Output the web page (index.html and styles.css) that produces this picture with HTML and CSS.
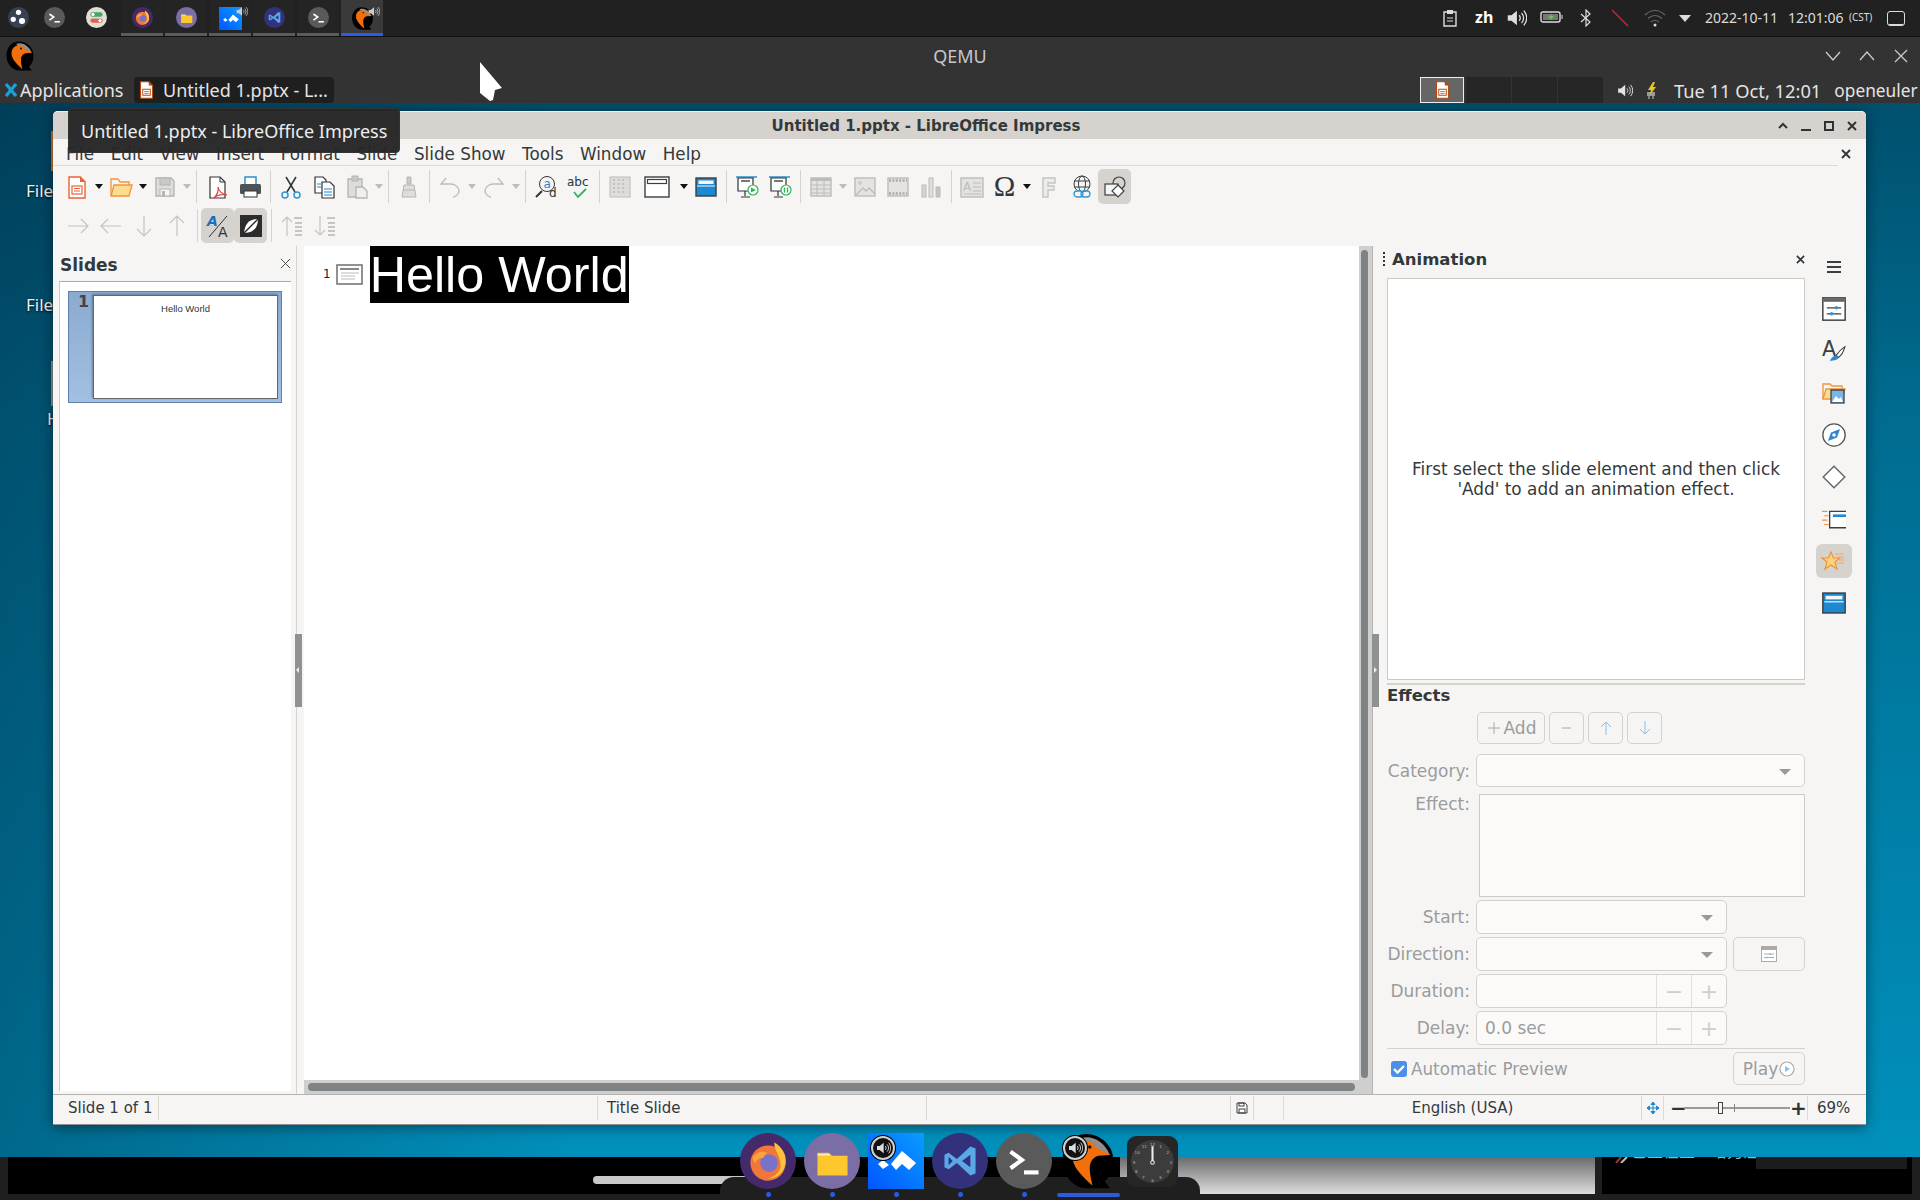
FILE: index.html
```html
<!DOCTYPE html>
<html>
<head>
	<meta charset="utf-8"/>
	<title>QEMU - Untitled 1.pptx</title>
	<link rel="stylesheet" href="styles.css">
</head>
<body>
<svg class="defs" xmlns="http://www.w3.org/2000/svg">
	<symbol id="i-qemu" viewBox="0 0 64 64">
		<path d="M30 1C14 1 3 14 3 31s12 32 28 32h26l-6-8c7-6 10-14 10-24C61 14 46 1 30 1z" fill="#000"/>
		<path d="M24 6c12-4 26 3 33 19l-17-4-12-9z" fill="#8f8f8f"/>
		<path d="M24 10c8-3 14 0 18 7l16 8-14 1c-5 1-10 6-10 14 0 8 2 14 3 20C26 50 13 38 14 25c0-7 5-13 10-15z" fill="#f26f0c"/>
		<circle cx="34" cy="16" r="2" fill="#111"/>
	</symbol>
	<symbol id="i-firefox" viewBox="0 0 54 54">
		<circle cx="27" cy="27" r="27" fill="#452a6b"/>
		<circle cx="27" cy="29" r="17" fill="#f0763a"/>
		<path d="M33 9c8 5 12 12 11 20-1 9-8 15-17 15 8-2 13-8 12-15-1-8-6-12-6-20z" fill="#fcc13d"/>
		<circle cx="28" cy="29" r="8.5" fill="#7a72c9"/>
		<path d="M12 24c4-6 10-7 14-5l-4 5c-4 0-7 2-7 6z" fill="#fba43c"/>
	</symbol>
	<symbol id="i-folder" viewBox="0 0 54 54">
		<circle cx="27" cy="27" r="27" fill="#7b6ea6"/>
		<path d="M13 19h11l3 3h15v19H13z" fill="#fdc72e"/>
		<path d="M13 21h12" stroke="#fff" stroke-width="1"/>
	</symbol>
	<symbol id="i-app" viewBox="0 0 56 56">
		<defs><linearGradient id="g-app" x1="1" y1="0" x2="0" y2="1"><stop offset="0" stop-color="#0a9cff"/><stop offset="1" stop-color="#0056ff"/></linearGradient></defs>
		<rect width="56" height="56" fill="url(#g-app)"/>
		<path d="M34 18l14 12-7 7-7-6-6 6-5-6zM10 31l5-4 6 5-6 4z" fill="#fff"/>
	</symbol>
	<symbol id="i-code" viewBox="0 0 54 54">
		<circle cx="27" cy="27" r="27" fill="#33307c"/>
		<path d="M37 13l-13 12-8-6-4 2v12l4 2 8-6 13 12 5-2V15zM37 21v12l-8-6zM16 23l4 4-4 4z" fill="#5aa9e6"/>
	</symbol>
	<symbol id="i-term" viewBox="0 0 54 54">
		<circle cx="27" cy="27" r="27" fill="#5a5a5a"/>
		<path d="M14 18l11 8-11 8" fill="none" stroke="#fff" stroke-width="4"/>
		<path d="M27 38h14" stroke="#fff" stroke-width="4"/>
	</symbol>
	<symbol id="i-speaker" viewBox="0 0 24 24">
		<path d="M3 9h4l6-5v16l-6-5H3z" fill="currentColor"/>
		<path d="M15.500 9c1.500 2 1.500 4 0 6M18 6.500c3 3 3 8 0 11M20.500 4c4 5 4 11 0 16" fill="none" stroke="currentColor" stroke-width="1.400"/>
	</symbol>
	<symbol id="i-impress" viewBox="0 0 20 24">
		<path d="M2 1h11l5 5v17H2z" fill="#fff" stroke="#b84a10" stroke-width="1.500"/>
		<path d="M13 0l6 6h-6z" fill="#b84a10"/>
		<rect x="5" y="11" width="10" height="8" fill="none" stroke="#b84a10" stroke-width="1.300"/>
		<path d="M7 14h6M7 16.500h6" stroke="#b84a10"/>
	</symbol>
</svg>

<div class="screen">
	<div class="top-panel">
		<div class="launchers">
			<svg class="top-ic" viewBox="0 0 24 24"><circle cx="12" cy="12" r="12" fill="#3a4054"/><circle cx="12" cy="6" r="3" fill="#fff"/><circle cx="6" cy="14" r="3" fill="#fff"/><circle cx="16" cy="16" r="3.500" fill="#fff"/></svg>
			<svg class="top-ic"><use href="#i-term"/></svg>
			<svg class="top-ic top-ic-wide" viewBox="0 0 24 24"><circle cx="12" cy="12" r="12" fill="#dfe0d2"/><rect x="5" y="6" width="14" height="5" rx="2.500" fill="#45a66a"/><rect x="5" y="13" width="14" height="5" rx="2.500" fill="#e0605c"/><circle cx="8" cy="8.500" r="1.800" fill="#fff"/><circle cx="16" cy="15.500" r="1.800" fill="#fff"/></svg>
		</div>
		<div class="tasks">
			<div class="task"><svg class="top-ic"><use href="#i-firefox"/></svg></div>
			<div class="task"><svg class="top-ic"><use href="#i-folder"/></svg></div>
			<div class="task"><svg class="top-ic top-ic-sq"><use href="#i-app"/></svg><svg class="task-snd"><use href="#i-speaker"/></svg></div>
			<div class="task"><svg class="top-ic"><use href="#i-code"/></svg></div>
			<div class="task"><svg class="top-ic"><use href="#i-term"/></svg></div>
			<div class="task task-on"><svg class="top-ic top-ic-sq"><use href="#i-qemu"/></svg><svg class="task-snd"><use href="#i-speaker"/></svg></div>
		</div>
		<div class="tray">
			<svg class="tray-ic" viewBox="0 0 16 18"><path d="M2 3h12v14H2z" fill="none" stroke="#ddd" stroke-width="1.400"/><rect x="5" y="1" width="6" height="4" fill="#ddd"/><path d="M5 9h6M5 12h6" stroke="#ddd"/></svg>
			<span class="tray-zh">zh</span>
			<svg class="tray-ic tray-snd"><use href="#i-speaker"/></svg>
			<svg class="tray-bat" viewBox="0 0 24 14"><rect x="1" y="2" width="19" height="10" rx="2" fill="none" stroke="#ddd" stroke-width="1.400"/><rect x="3" y="4" width="15" height="6" fill="#777"/><path d="M22 5v4" stroke="#ddd"/><path d="M12 3l-4 5h3l-1 3 4-5h-3z" fill="#5fd03c"/></svg>
			<svg class="tray-ic" viewBox="0 0 16 18"><path d="M3 5l9 8-4 4V1l4 4-9 8" fill="none" stroke="#ddd" stroke-width="1.200"/></svg>
			<svg class="tray-ic" viewBox="0 0 18 18"><path d="M1 1l16 16" stroke="#c0303c" stroke-width="1.200"/></svg>
			<svg class="tray-ic" viewBox="0 0 22 18"><path d="M1 6c6-6 14-6 20 0M4 9.500c4-4 10-4 14 0M7 13c2-2 6-2 8 0" fill="none" stroke="#666" stroke-width="1.200"/><circle cx="11" cy="16" r="1.500" fill="#ddd"/></svg>
			<span class="tray-arrow"></span>
			<span class="tray-date">2022-10-11</span>
			<span class="tray-time">12:01:06</span>
			<span class="tray-zone">(CST)</span>
			<span class="tray-box"></span>
		</div>
	</div>

	<div class="qemu-title">
		<svg class="qemu-logo"><use href="#i-qemu"/></svg>
		<span class="qemu-name">QEMU</span>
		<div class="qemu-btns">
			<svg viewBox="0 0 18 18"><path d="M2 5l7 8 7-8" fill="none" stroke="#ccc" stroke-width="1.300"/></svg>
			<svg viewBox="0 0 18 18"><path d="M2 13l7-8 7 8" fill="none" stroke="#ccc" stroke-width="1.300"/></svg>
			<svg viewBox="0 0 18 18"><path d="M3 3l12 12M15 3L3 15" fill="none" stroke="#ccc" stroke-width="1.300"/></svg>
		</div>
	</div>

	<div class="xfce-panel">
		<svg class="xfce-logo" viewBox="0 0 14 16"><path d="M2 2l10 12M12 2L2 14" stroke="#1aa0d8" stroke-width="3.400"/></svg>
		<span class="xfce-apps">Applications</span>
		<div class="xfce-task"><svg class="xfce-doc"><use href="#i-impress"/></svg>Untitled 1.pptx - L...</div>
		<div class="pager">
			<div class="pager-cell pager-on"><svg class="xfce-doc"><use href="#i-impress"/></svg></div>
			<div class="pager-cell"></div>
			<div class="pager-cell"></div>
			<div class="pager-cell"></div>
		</div>
		<svg class="xfce-snd"><use href="#i-speaker"/></svg>
		<svg class="xfce-plug" viewBox="0 0 18 18"><rect x="5" y="11" width="8" height="4" fill="#999"/><path d="M7 15v3M11 15v3" stroke="#ccc"/><path d="M11 1L6 9h3l-1 5 6-8h-3l2-5z" fill="#e8c81c"/></svg>
		<span class="xfce-clock">Tue 11 Oct, 12:01</span>
		<span class="xfce-user">openeuler</span>
	</div>

	<div class="desktop">
		<span class="desk-label desk-a">File</span>
		<span class="desk-label desk-b">File</span>
		<span class="desk-label desk-c">H</span>
		<div class="sliver sliver-a"></div>
		<div class="sliver sliver-b"></div>

		<div class="lo-window">
			<div class="lo-title">
				<span class="lo-title-text">Untitled 1.pptx - LibreOffice Impress</span>
				<div class="lo-title-btns">
					<svg viewBox="0 0 12 12"><path d="M2 8l4-4 4 4" fill="none" stroke="#2e3436" stroke-width="2"/></svg>
					<svg viewBox="0 0 12 12"><path d="M1 10h10" stroke="#2e3436" stroke-width="2"/></svg>
					<svg viewBox="0 0 12 12"><rect x="2" y="2" width="8" height="8" fill="none" stroke="#2e3436" stroke-width="2"/></svg>
					<svg viewBox="0 0 12 12"><path d="M2 2l8 8M10 2l-8 8" stroke="#2e3436" stroke-width="2"/></svg>
				</div>
			</div>

			<div class="lo-menu">
				<span>File</span><span>Edit</span><span>View</span><span>Insert</span><span>Format</span><span>Slide</span><span>Slide Show</span><span>Tools</span><span>Window</span><span>Help</span>
				<svg class="lo-menu-close" viewBox="0 0 10 10"><path d="M1 1l8 8M9 1L1 9" stroke="#2e3436" stroke-width="1.800"/></svg>
			</div>

			<div class="toolbar">
				<span class="tb"><svg viewBox="0 0 24 24"><path d="M4 2h11l5 5v16H4z" fill="#fff" stroke="#e8623c" stroke-width="1.400"/><path d="M15 1l6 6h-6z" fill="#e8623c"/><rect x="7" y="11" width="10" height="8" fill="none" stroke="#e8623c" stroke-width="1.200"/><path d="M9 13.500h6M9 16h6" stroke="#e8623c"/></svg></span><span class="dd"></span>
				<span class="tb"><svg viewBox="0 0 24 24"><path d="M2 20V4h7l2 3h9v3" fill="none" stroke="#f0923c" stroke-width="1.300"/><path d="M2 21l3-11h18l-3 11z" fill="#fcdc8f" stroke="#f0923c" stroke-width="1.300"/></svg></span><span class="dd"></span>
				<span class="tb"><svg viewBox="0 0 24 24"><path d="M3 3h15l3 3v15H3z" fill="#dedddb" stroke="#b5b5b3" stroke-width="1.400"/><rect x="7" y="3" width="10" height="7" fill="#c9c9c7" stroke="#b5b5b3"/><rect x="7" y="14" width="10" height="7" fill="#f6f5f4" stroke="#b5b5b3"/><rect x="9" y="16" width="3" height="5" fill="#b5b5b3"/></svg></span><span class="dd dd-off"></span>
				<span class="sep"></span>
				<span class="tb"><svg viewBox="0 0 24 24"><path d="M5 2h10l5 5v16H5z" fill="#fff" stroke="#2e3436" stroke-width="1.200"/><path d="M15 2v5h5" fill="none" stroke="#2e3436"/><path d="M13 12c1 5-1 8-4 11 3-3 8-4 13-3-5-1-8-3-9-8z" fill="none" stroke="#e0403a" stroke-width="1.200"/></svg></span>
				<span class="tb"><svg viewBox="0 0 24 24"><rect x="7" y="2" width="11" height="8" fill="#fff" stroke="#1e88c9" stroke-width="1.400"/><rect x="2" y="9" width="21" height="10" rx="1.500" fill="#4d5356"/><rect x="6" y="16" width="13" height="6" fill="#fff" stroke="#2e3436"/></svg></span>
				<span class="sep"></span>
				<span class="tb"><svg viewBox="0 0 24 24"><path d="M7 2l9 15M17 2L8 17" stroke="#2e3436" stroke-width="1.500"/><circle cx="6" cy="20" r="3" fill="none" stroke="#2f96d8" stroke-width="1.500"/><circle cx="18" cy="20" r="3" fill="none" stroke="#2f96d8" stroke-width="1.500"/></svg></span>
				<span class="tb"><svg viewBox="0 0 24 24"><path d="M3 2h8l3 3v13H3z" fill="#fff" stroke="#2e3436" stroke-width="1.200"/><path d="M10 7h8l4 4v12H10z" fill="#fff" stroke="#2e3436" stroke-width="1.200"/><path d="M5 9h4M5 12h4M12 14h8M12 17h8M12 20h8" stroke="#1e88c9" stroke-width="1.200"/></svg></span>
				<span class="tb"><svg viewBox="0 0 24 24"><path d="M3 4h14v18H3z" fill="#dedddb" stroke="#b5b5b3" stroke-width="1.300"/><rect x="7" y="1" width="6" height="5" fill="#c9c9c7" stroke="#b5b5b3"/><path d="M11 12h7l4 4v7H11z" fill="#f0efed" stroke="#b5b5b3" stroke-width="1.300"/></svg></span><span class="dd dd-off"></span>
				<span class="sep"></span>
				<span class="tb"><svg viewBox="0 0 24 24"><path d="M10 2h4v7h-4z" fill="#c9c9c7" stroke="#b5b5b3"/><path d="M7 10h10l2 12H5z" fill="#dedddb" stroke="#b5b5b3"/><path d="M6 15h12" stroke="#b5b5b3"/></svg></span>
				<span class="sep"></span>
				<span class="tb"><svg viewBox="0 0 24 24"><path d="M8 3L3 9h5M3 9h10c5 0 8 4 8 7 0 3-3 6-6 6" fill="none" stroke="#bcbcba" stroke-width="1.400"/></svg></span><span class="dd dd-off"></span>
				<span class="tb"><svg viewBox="0 0 24 24"><path d="M16 3l5 6h-5M21 9H11c-5 0-8 4-8 7 0 3 3 6 6 6" fill="none" stroke="#bcbcba" stroke-width="1.400"/></svg></span><span class="dd dd-off"></span>
				<span class="sep"></span>
				<span class="tb"><svg viewBox="0 0 24 24"><circle cx="13" cy="9" r="7.500" fill="none" stroke="#2e3436"/><path d="M2 22l6-6" stroke="#2e3436" stroke-width="2"/><text x="9.500" y="13" class="svg-t" fill="#1e88c9">a</text><text x="15" y="22" class="svg-t" fill="#2e3436">d</text></svg></span>
				<span class="tb"><svg viewBox="0 0 24 24"><text x="0" y="11" class="svg-t" fill="#2e3436">abc</text><path d="M7 17l4 5 8-8" fill="none" stroke="#2fb35a" stroke-width="1.800"/></svg></span>
				<span class="sep"></span>
				<span class="tb"><svg viewBox="0 0 24 24"><rect x="2" y="2" width="20" height="20" fill="#dedddb" stroke="#bcbcba"/><path d="M5 5h14M5 9h14M5 13h14M5 17h14" stroke="#b5b5b3" stroke-dasharray="2 2.600" stroke-width="1.400"/></svg></span>
				<span class="tb tb-wide"><svg viewBox="0 0 28 24"><rect x="2" y="2" width="24" height="20" fill="#fff" stroke="#3a3f41" stroke-width="1.400"/><rect x="4.500" y="4.500" width="19" height="4" fill="none" stroke="#3a3f41" stroke-width="1.200"/></svg></span><span class="dd"></span>
				<span class="tb"><svg viewBox="0 0 24 24"><rect x="2" y="3" width="20" height="18" fill="#1e88d0" stroke="#3a3f41" stroke-width="1.400"/><rect x="4.500" y="5.500" width="15" height="3.500" fill="#f6f5f4"/><path d="M3 11h18" stroke="#f6f5f4"/></svg></span>
				<span class="sep"></span>
				<span class="tb"><svg viewBox="0 0 24 24"><path d="M1 2h21" stroke="#1e88c9" stroke-width="1.400"/><path d="M3 3h15v13H3z" fill="#fff" stroke="#2e3436" stroke-width="1.200"/><path d="M6 6h9" stroke="#777" stroke-width="2"/><path d="M10 16v5M6 22h9" stroke="#2e3436" stroke-width="1.200"/><circle cx="18" cy="15" r="5" fill="#fff" stroke="#2fb35a" stroke-width="1.200"/><path d="M16 12.500l5 2.500-5 2.500z" fill="#2fb35a"/></svg></span>
				<span class="tb"><svg viewBox="0 0 24 24"><path d="M1 2h21" stroke="#1e88c9" stroke-width="1.400"/><path d="M3 3h15v13H3z" fill="#fff" stroke="#2e3436" stroke-width="1.200"/><path d="M6 6h9" stroke="#777" stroke-width="2"/><path d="M10 16v5M6 22h9" stroke="#2e3436" stroke-width="1.200"/><circle cx="18" cy="15" r="5" fill="#fff" stroke="#2fb35a" stroke-width="1.200"/><path d="M16.500 12.500v5M19.500 12.500v5" stroke="#2fb35a" stroke-width="1.400"/></svg></span>
				<span class="sep"></span>
				<span class="tb"><svg viewBox="0 0 24 24"><rect x="2" y="3" width="20" height="18" fill="#e4e3e1" stroke="#bcbcba" stroke-width="1.400"/><rect x="2" y="3" width="20" height="3" fill="#bcbcba"/><path d="M2 10h20M2 14h20M2 18h20M8 6v15M15 6v15" stroke="#bcbcba"/></svg></span><span class="dd dd-off"></span>
				<span class="tb"><svg viewBox="0 0 24 24"><rect x="2" y="3" width="20" height="18" fill="#e4e3e1" stroke="#bcbcba" stroke-width="1.400"/><circle cx="7" cy="8" r="2" fill="#ccc"/><path d="M3 20l7-7 3 3 3-3 6 6" fill="none" stroke="#bcbcba" stroke-width="1.400"/></svg></span>
				<span class="tb"><svg viewBox="0 0 24 24"><rect x="2" y="3" width="20" height="18" fill="#e4e3e1" stroke="#bcbcba" stroke-width="1.400"/><path d="M3 5.500h18M3 18.500h18" stroke="#aaa" stroke-width="2.400" stroke-dasharray="2 1.400"/></svg></span>
				<span class="tb"><svg viewBox="0 0 24 24"><rect x="3" y="10" width="4" height="12" fill="#d5d4d2" stroke="#bcbcba"/><rect x="10" y="3" width="4" height="19" fill="#dedddb" stroke="#bcbcba"/><rect x="17" y="12" width="4" height="10" fill="#c4c4c2" stroke="#bcbcba"/></svg></span>
				<span class="sep"></span>
				<span class="tb"><svg viewBox="0 0 24 24"><rect x="1" y="3" width="22" height="19" fill="#e4e3e1" stroke="#bcbcba" stroke-width="1.400"/><text x="3" y="16" class="svg-t" fill="#bcbcba">A</text><path d="M13 8h8M13 12h8M13 16h8M4 19h17" stroke="#bcbcba"/></svg></span>
				<span class="tb"><span class="omega">Ω</span></span><span class="dd"></span>
				<span class="tb"><svg viewBox="0 0 24 24"><path d="M6 3h12v5h-7v3h6v4h-6v7H6z" fill="#ececea" stroke="#c4c4c2" stroke-width="1.400"/></svg></span>
				<span class="tb"><svg viewBox="0 0 24 24"><circle cx="12" cy="9" r="8" fill="none" stroke="#3a3f41"/><ellipse cx="12" cy="9" rx="3.500" ry="8" fill="none" stroke="#3a3f41"/><path d="M4 6h16M4 12h16" stroke="#3a3f41"/><rect x="4" y="16" width="9" height="6" rx="3" fill="#f6f5f4" stroke="#2f96d8" stroke-width="1.300"/><rect x="11" y="16" width="9" height="6" rx="3" fill="none" stroke="#2f96d8" stroke-width="1.300"/></svg></span>
				<span class="tb tb-on"><svg viewBox="0 0 24 24"><circle cx="16" cy="8" r="6" fill="none" stroke="#3a3f41" stroke-width="1.200"/><rect x="2" y="9" width="13" height="11" fill="#f6f5f4" stroke="#3a3f41" stroke-width="1.200"/><path d="M15 10l6 6-6 6-6-6z" fill="#fff" stroke="#3a3f41" stroke-width="1.200"/></svg></span>
			</div>

			<div class="toolbar toolbar-b">
				<span class="tb"><svg viewBox="0 0 24 24"><path d="M2 12h20M15 5l7 7-7 7" fill="none" stroke="#c4c4c2" stroke-width="1.200"/></svg></span>
				<span class="tb"><svg viewBox="0 0 24 24"><path d="M22 12H2M9 5l-7 7 7 7" fill="none" stroke="#c4c4c2" stroke-width="1.200"/></svg></span>
				<span class="tb"><svg viewBox="0 0 24 24"><path d="M12 2v20M5 15l7 7 7-7" fill="none" stroke="#c4c4c2" stroke-width="1.200"/></svg></span>
				<span class="tb"><svg viewBox="0 0 24 24"><path d="M12 22V2M5 9l7-7 7 7" fill="none" stroke="#c4c4c2" stroke-width="1.200"/></svg></span>
				<span class="sep"></span>
				<span class="tb tb-on"><svg viewBox="0 0 24 24"><path d="M3 23L21 2" stroke="#2e3436"/><text x="1" y="12" class="svg-t svg-big svg-i" fill="#1a6fc0">A</text><text x="12" y="23" class="svg-t svg-big" fill="#2e3436">A</text></svg></span>
				<span class="tb tb-on"><svg viewBox="0 0 24 24"><rect x="1" y="1" width="22" height="22" fill="#2c2c2c"/><path d="M5 19C6 9 11 5 19 5c0 8-4 14-14 14z" fill="#fff"/><path d="M3 21L21 3" stroke="#2c2c2c" stroke-width="1.400"/></svg></span>
				<span class="sep"></span>
				<span class="tb"><svg viewBox="0 0 24 24"><path d="M7 22V3M2 8l5-5 5 5" fill="none" stroke="#c4c4c2" stroke-width="1.200"/><path d="M14 4h8M15 9h7M15 13h7M15 17h7M15 21h7" stroke="#b5b5b3" stroke-width="1.300"/></svg></span>
				<span class="tb"><svg viewBox="0 0 24 24"><path d="M7 2v19M2 16l5 5 5-5" fill="none" stroke="#c4c4c2" stroke-width="1.200"/><path d="M14 4h8M15 9h7M15 13h7M15 17h7M15 21h7" stroke="#b5b5b3" stroke-width="1.300"/></svg></span>
			</div>

			<div class="lo-body">
				<div class="slides-pane">
					<div class="slides-head"><b>Slides</b><svg viewBox="0 0 12 12"><path d="M1 1l10 10M11 1L1 11" stroke="#3a3f41"/></svg></div>
					<div class="slides-list">
						<div class="thumb-sel">
							<span class="thumb-num">1</span>
							<div class="thumb"><span>Hello World</span></div>
						</div>
					</div>
				</div>
				<div class="sash"><i></i></div>
				<div class="editor">
					<div class="editor-row">
						<div class="outline">
							<span class="outline-num">1</span>
							<svg class="outline-ic" viewBox="0 0 27 21"><rect x="1" y="1" width="25" height="19" fill="#fff" stroke="#777" stroke-width="1.600"/><path d="M4 5h19" stroke="#888" stroke-width="2"/><path d="M5 9h18M5 12h14M5 15h14" stroke="#bbb"/></svg>
							<span class="outline-text">Hello World</span>
						</div>
						<div class="vscroll"><i></i></div>
					</div>
					<div class="hscroll"><i></i></div>
				</div>
				<div class="sash sash-r"><i></i></div>
				<div class="anim-pane">
					<div class="anim-head">
						<span class="grip"></span><b>Animation</b>
						<svg viewBox="0 0 10 10"><path d="M1 1l8 8M9 1L1 9" stroke="#2e3436" stroke-width="1.800"/></svg>
					</div>
					<div class="anim-box">First select the slide element and then click<br>'Add' to add an animation effect.</div>
					<div class="anim-rule"></div>
					<b class="fx-title">Effects</b>
					<div class="fx-row fx-row-btns">
						<span class="fx-label"></span>
						<span class="btn btn-add"><svg viewBox="0 0 16 16"><path d="M8 2v12M2 8h12" stroke="#a8a8a8"/></svg>Add</span>
						<span class="btn btn-sq"><svg viewBox="0 0 16 16"><path d="M3 8h9" stroke="#a8a8a8"/></svg></span>
						<span class="btn btn-sq"><svg viewBox="0 0 16 16"><path d="M8 15V2M3 7l5-5 5 5" fill="none" stroke="#8cc0e4"/></svg></span>
						<span class="btn btn-sq"><svg viewBox="0 0 16 16"><path d="M8 1v13M3 9l5 5 5-5" fill="none" stroke="#8cc0e4"/></svg></span>
					</div>
					<div class="fx-row fx-row-cat">
						<span class="fx-label">Category:</span>
						<span class="combo combo-full"></span>
					</div>
					<div class="fx-row fx-row-list">
						<span class="fx-label">Effect:</span>
						<span class="fx-list"></span>
					</div>
					<div class="fx-row">
						<span class="fx-label">Start:</span>
						<span class="combo"></span>
					</div>
					<div class="fx-row">
						<span class="fx-label">Direction:</span>
						<span class="combo"></span>
						<span class="btn btn-wide"><svg viewBox="0 0 16 16"><rect x="0.500" y="0.500" width="15" height="15" fill="#fff" stroke="#aaa"/><rect x="1" y="1" width="14" height="3" fill="#aaa"/><path d="M3 8h10M3 11.500h10" stroke="#aaa"/><circle cx="9" cy="8" r="1" fill="#8cc0e4"/><circle cx="6" cy="11.500" r="1" fill="#8cc0e4"/></svg></span>
					</div>
					<div class="fx-row">
						<span class="fx-label">Duration:</span>
						<span class="spin"><span class="spin-val"></span><span class="spin-btn">−</span><span class="spin-btn">+</span></span>
					</div>
					<div class="fx-row">
						<span class="fx-label">Delay:</span>
						<span class="spin"><span class="spin-val">0.0 sec</span><span class="spin-btn">−</span><span class="spin-btn">+</span></span>
					</div>
					<div class="fx-foot">
						<span class="check"><svg viewBox="0 0 16 16"><path d="M3 8l3.500 3.500L13 5" fill="none" stroke="#fff" stroke-width="2.400"/></svg></span>
						<span class="check-label">Automatic Preview</span>
						<span class="btn btn-play">Play<svg viewBox="0 0 16 16"><circle cx="8" cy="8" r="7" fill="#fff" stroke="#aaa" stroke-width="1.200"/><path d="M6 5l5 3-5 3z" fill="#8cc0e4"/></svg></span>
					</div>
				</div>
				<div class="deck">
					<span class="deck-item"><svg viewBox="0 0 16 14"><path d="M1 2h14M1 7h14M1 12h14" stroke="#3a3f41" stroke-width="2"/></svg></span>
					<span class="deck-item"><svg viewBox="0 0 20 20"><rect x="0.700" y="0.700" width="18.600" height="18.600" fill="#fff" stroke="#3a3f41" stroke-width="1.200"/><rect x="1" y="1" width="18" height="3" fill="#666"/><path d="M4 9h12M4 14h12" stroke="#3a3f41"/><circle cx="12" cy="9" r="1.500" fill="#2f96d8"/><circle cx="8" cy="14" r="1.500" fill="#2f96d8"/></svg></span>
					<span class="deck-item"><svg viewBox="0 0 22 20"><text x="0" y="15" class="svg-deck-a" fill="#3a3f41">A</text><path d="M21 6c-3 2-6 5-8 8l2 2c3-2 5-6 6-10z" fill="#fff" stroke="#3a3f41"/><path d="M13 14c-2 0-4 2-6 5 4 0 8-1 8-3z" fill="#2f86d0"/></svg></span>
					<span class="deck-item"><svg viewBox="0 0 24 22"><path d="M1 17V2h7l2 2h10v3" fill="none" stroke="#f0923c" stroke-width="1.300"/><path d="M1 17l3-10h19l-3 10z" fill="#fcdc8f" stroke="#f0923c" stroke-width="1.300"/><rect x="9" y="8" width="13" height="13" fill="#7db4e6" stroke="#2e3436" stroke-width="1.200"/><path d="M10 20l4-6 3 3 2-2 2 5z" fill="#fff"/></svg></span>
					<span class="deck-item"><svg viewBox="0 0 20 20"><circle cx="10" cy="10" r="9.300" fill="#fff" stroke="#555" stroke-width="1.100"/><path d="M15 5l-2.500 7L5 15l2.500-7z" fill="#2f86d0"/><circle cx="10" cy="10" r="1.500" fill="#fff"/></svg></span>
					<span class="deck-item"><svg viewBox="0 0 20 20"><path d="M10 1l9 9-9 9-9-9z" fill="#fff" stroke="#666" stroke-width="1.200"/></svg></span>
					<span class="deck-item"><svg viewBox="0 0 22 20"><path d="M0 3h5M2 7h4M0 11h5M2 15h4" stroke="#f0923c"/><path d="M22 3H7v15h15" fill="#fff" stroke="#3a3f41" stroke-width="1.200"/><path d="M10 7h12" stroke="#1e88d0" stroke-width="2.400"/></svg></span>
					<span class="deck-item deck-on"><svg viewBox="0 0 24 20"><path d="M9 1l2.500 6H18l-5 4 2 7-6-4-6 4 2-7-5-4h6.500z" fill="#fcd27c" stroke="#f0923c" stroke-width="1.200"/><path d="M13 3h9M15 6h7M17 9h6M15 12h7" stroke="#f0a86a"/></svg></span>
					<span class="deck-item"><svg viewBox="0 0 20 18"><rect x="0.700" y="0.700" width="18.600" height="16.600" fill="#1e88d0" stroke="#3a3f41" stroke-width="1.200"/><rect x="3" y="3" width="14" height="3" fill="#f6f5f4"/><path d="M2 8h16" stroke="#f6f5f4"/></svg></span>
				</div>
			</div>

			<div class="statusbar">
				<span class="st st-a">Slide 1 of 1</span>
				<span class="st st-b"></span>
				<span class="st st-c">Title Slide</span>
				<span class="st st-d"></span>
				<span class="st st-e"><svg viewBox="0 0 12 12"><path d="M1 1h8l2 2v8H1z" fill="#fff" stroke="#3a3f41"/><rect x="3" y="1" width="5" height="3" fill="none" stroke="#3a3f41"/><rect x="3" y="7" width="6" height="4" fill="none" stroke="#3a3f41"/></svg></span>
				<span class="st st-f"></span>
				<span class="st st-g">English (USA)</span>
				<span class="st st-h"><svg viewBox="0 0 14 14"><path d="M7 1v12M1 7h12M7 1L5 3.500h4zM7 13l-2-2.500h4zM1 7l2.500-2v4zM13 7l-2.500-2v4z" fill="#1e88d0" stroke="#1e88d0"/></svg></span>
				<span class="st st-i">
					<span class="zoom-btn">−</span>
					<span class="zoom-track"><i class="zoom-tick"></i><i class="zoom-knob"></i></span>
					<span class="zoom-btn">+</span>
				</span>
				<span class="st st-j">69%</span>
			</div>
		</div>

		<div class="tooltip">Untitled 1.pptx - LibreOffice Impress</div>
	</div>

	<div class="under">
		<div class="under-dark"></div>
		<div class="under-black"><i class="pill"></i></div>
		<div class="under-grad"></div>
		<div class="under-dark under-gap"></div>
		<div class="under-right">
			<svg class="under-pen" viewBox="0 0 14 6"><path d="M1 6l5-6" stroke="#a03030" stroke-width="2"/><path d="M6 6l6-6" stroke="#bbb" stroke-width="2"/></svg>
			<div class="under-text">已正在上二培力注</div>
			<div class="under-bar"></div>
		</div>
		<div class="under-dark"></div>
	</div>
	<div class="strip"></div>

	<div class="dock-base"></div>
	<div class="dock">
		<div class="dock-item"><svg class="dock-ic"><use href="#i-firefox"/></svg><i class="dock-dot"></i></div>
		<div class="dock-item"><svg class="dock-ic"><use href="#i-folder"/></svg><i class="dock-dot"></i></div>
		<div class="dock-item"><svg class="dock-ic"><use href="#i-app"/></svg><span class="snd-badge"><svg><use href="#i-speaker"/></svg></span><i class="dock-dot"></i></div>
		<div class="dock-item"><svg class="dock-ic"><use href="#i-code"/></svg><i class="dock-dot"></i></div>
		<div class="dock-item"><svg class="dock-ic"><use href="#i-term"/></svg><i class="dock-dot"></i></div>
		<div class="dock-item"><svg class="dock-ic"><use href="#i-qemu"/></svg><span class="snd-badge"><svg><use href="#i-speaker"/></svg></span><i class="dock-dot dock-dot-on"></i></div>
		<div class="dock-item">
			<svg class="dock-clock" viewBox="0 0 50 50">
				<rect width="50" height="50" rx="9" fill="#262626"/>
				<circle cx="25" cy="25" r="21" fill="#3c3c3c"/>
				<g class="clock-nums" fill="#bbb" text-anchor="middle">
					<text x="25" y="10">12</text><text x="33" y="12">1</text><text x="40" y="18">2</text><text x="43" y="27">3</text><text x="40" y="36">4</text><text x="33" y="42">5</text><text x="25" y="45">6</text><text x="16" y="42">7</text><text x="9" y="36">8</text><text x="7" y="27">9</text><text x="10" y="18">10</text><text x="17" y="12">11</text>
				</g>
				<path d="M25 10v15" stroke="#eee" stroke-width="2"/>
				<circle cx="25" cy="26" r="1.800" fill="#333" stroke="#eee"/>
			</svg>
		</div>
	</div>

	<svg class="cursor" viewBox="0 0 24 40"><path d="M1 1l22 26-7 2-2 10-3 1-10-8z" fill="#fff"/></svg>
</div>
</body>
</html>
```

FILE: styles.css
```css
* {
	box-sizing: border-box;
}
html, body {
	margin: 0;
	padding: 0;
}
body {
	width: 1920px;
	height: 1200px;
	overflow: hidden;
	background: #1f1f1f;
	font-family: "DejaVu Sans", sans-serif;
	color: #2e3436;
}
.defs {
	position: absolute;
	width: 0;
	height: 0;
}
.screen {
	position: relative;
	width: 1920px;
	height: 1200px;
	display: flex;
	flex-direction: column;
}

/* top panel */
.top-panel {
	height: 37px;
	background: #212121;
	border-bottom: 1px solid #111;
	display: flex;
	font-family: "Noto Sans", sans-serif;
	color: #ddd;
}
.top-ic {
	width: 21px;
	height: 21px;
	display: block;
}
.top-ic-sq {
	width: 23px;
	height: 23px;
}
.launchers {
	width: 121px;
	height: 36px;
	padding: 7px 0 0 8px;
	display: flex;
	gap: 15px;
}
.launchers .top-ic-wide {
	margin-left: 6px;
}
.tasks {
	display: flex;
	gap: 2px;
}
.task {
	position: relative;
	width: 42px;
	height: 36px;
	padding-top: 7px;
	display: flex;
	justify-content: center;
	border-bottom: 3px solid #5c5c5c;
	background: #242424;
}
.task-on {
	border-bottom-color: #2a5fe0;
	background: #3a3a3a;
}
.task-snd {
	position: absolute;
	top: 5px;
	right: 3px;
	width: 13px;
	height: 13px;
	color: #ccc;
}
.tray {
	margin-left: auto;
	height: 36px;
	position: relative;
	width: 500px;
	font-size: 15px;
}
.tray > * {
	position: absolute;
}
.tray-ic {
	top: 9px;
	width: 18px;
	height: 18px;
}
.tray-ic:nth-child(1) { left: 21px; }
.tray-zh {
	left: 55px;
	top: 6px;
	font-weight: 700;
	font-size: 16px;
	color: #fff;
}
.tray-snd { left: 85px; width: 22px; height: 22px; top: 7px; color: #ddd; }
.tray-bat { left: 120px; top: 10px; width: 24px; height: 14px; }
.tray-ic:nth-child(5) { left: 157px; }
.tray-ic:nth-child(6) { left: 191px; }
.tray-ic:nth-child(7) { left: 224px; width: 22px; }
.tray-arrow {
	left: 259px;
	top: 15px;
	border: 6px solid transparent;
	border-top: 7px solid #ddd;
	border-bottom: 0;
}
.tray-date { left: 285px; top: 8px; font-size: 14px; }
.tray-time { left: 368px; top: 8px; font-size: 14px; }
.tray-zone { left: 429px; top: 10px; font-size: 10px; }
.tray-box {
	left: 467px;
	top: 11px;
	width: 18px;
	height: 15px;
	border: 1px solid #ddd;
	border-radius: 3px;
	box-shadow: inset 0 -3px 0 -2px #ddd;
}

/* qemu window chrome */
.qemu-title {
	height: 40px;
	background: #333;
	position: relative;
	display: flex;
	align-items: center;
	justify-content: center;
	padding-bottom: 2px;
	font-family: "Noto Sans", sans-serif;
}
.qemu-logo {
	position: absolute;
	left: 5px;
	top: 4px;
	width: 30px;
	height: 30px;
}
.qemu-name {
	font-size: 18px;
	color: #c8c8c8;
}
.qemu-btns {
	position: absolute;
	right: 10px;
	top: 10px;
	display: flex;
	gap: 16px;
}
.qemu-btns svg {
	width: 18px;
	height: 18px;
}
.xfce-panel {
	height: 26px;
	background: #333;
	display: flex;
	align-items: center;
	font-family: "Noto Sans", sans-serif;
	font-size: 18px;
	color: #e4e4e4;
}
.xfce-logo {
	width: 14px;
	height: 16px;
	margin-left: 4px;
}
.xfce-apps {
	margin-left: 2px;
	width: 114px;
}
.xfce-task {
	width: 200px;
	height: 26px;
	background: #1f1f1f;
	border-radius: 4px;
	display: flex;
	align-items: center;
	padding-left: 5px;
	gap: 9px;
	white-space: nowrap;
}
.xfce-doc {
	width: 15px;
	height: 18px;
}
.pager {
	margin-left: 1086px;
	display: flex;
	gap: 1px;
}
.pager-cell {
	width: 45px;
	height: 26px;
	background: #262626;
}
.pager-on {
	width: 44px;
	background: #666;
	border: 1px solid #eee;
	display: flex;
	align-items: center;
	justify-content: center;
	margin-right: 1px;
}
.xfce-snd {
	width: 17px;
	height: 17px;
	margin-left: 13px;
	color: #e4e4e4;
}
.xfce-plug {
	width: 18px;
	height: 18px;
	margin-left: 9px;
}
.xfce-clock {
	margin-left: 14px;
	white-space: nowrap;
	font-size: 18.300px;
}
.xfce-user {
	margin-left: 13px;
	font-size: 17.300px;
}

/* desktop and the impress window */
.desktop {
	position: relative;
	height: 1054px;
	background:
		linear-gradient(90deg, rgba(0, 30, 50, .35), rgba(0, 30, 50, 0) 30%),
		linear-gradient(180deg, #00506e 0%, #006c90 30%, #0090bc 100%);
	overflow: hidden;
}
.desk-label {
	position: absolute;
	left: 26px;
	font-family: "Noto Sans", sans-serif;
	font-size: 17px;
	color: #eee;
	text-shadow: 0 1px 2px #000;
}
.desk-a { top: 76px; }
.desk-b { top: 190px; }
.desk-c { top: 304px; left: 47px; }
.sliver {
	position: absolute;
	left: 51px;
	width: 2px;
}
.sliver-a {
	top: 28px;
	height: 40px;
	background: #c7702e;
}
.sliver-b {
	top: 258px;
	height: 45px;
	background: #8a8f92;
}
.lo-window {
	position: absolute;
	left: 53px;
	top: 8px;
	width: 1813px;
	height: 1014px;
	background: #f6f5f4;
	border-radius: 5px 5px 0 0;
	box-shadow: 0 2px 14px rgba(0, 0, 0, .45);
	display: flex;
	flex-direction: column;
}
.lo-title {
	height: 28px;
	background: #d6d2ce;
	border-radius: 5px 5px 0 0;
	border-top: 1px solid #eee;
	display: flex;
	align-items: center;
	justify-content: center;
	position: relative;
}
.lo-title-text {
	font-size: 15px;
	font-weight: 700;
	color: #33393b;
	margin-left: -67px;
}
.lo-title-btns {
	position: absolute;
	right: 8px;
	top: 8px;
	display: flex;
	gap: 11px;
}
.lo-title-btns svg {
	width: 12px;
	height: 12px;
}
.lo-menu {
	height: 27px;
	margin-right: 28px;
	padding: 3px 0 0 1px;
	border-bottom: 1px solid #dcdad7;
	display: flex;
	align-items: center;
	font-size: 16.800px;
	color: #33393b;
	position: relative;
}
.lo-menu span {
	margin-left: 12px;
	margin-right: 4.550px;
}
.lo-menu-close {
	position: absolute;
	right: -13px;
	top: 10px;
	width: 10px;
	height: 10px;
}

/* toolbars */
.toolbar {
	height: 35px;
	margin-top: 3px;
	padding-left: 7px;
	display: flex;
	align-items: stretch;
}
.toolbar-b {
	margin-top: 4px;
	padding-left: 8px;
}
.tb {
	width: 33px;
	display: flex;
	align-items: center;
	justify-content: center;
	border-radius: 5px;
}
.tb svg,
.deck-item svg {
	overflow: visible;
}
.tb svg {
	width: 24px;
	height: 24px;
}
.tb-wide {
	width: 42px;
}
.tb-wide svg {
	width: 28px;
}
.tb-on {
	background: #d6d2ce;
}
.dd {
	width: 11px;
	display: flex;
	align-items: center;
	justify-content: center;
}
.dd::after {
	content: "";
	border: 4px solid transparent;
	border-top: 5px solid #111;
	border-bottom: 0;
}
.dd-off::after {
	border-top-color: #bcbcba;
}
.sep {
	width: 8px;
	position: relative;
}
.sep::after {
	content: "";
	position: absolute;
	left: 4px;
	top: 1px;
	bottom: 1px;
	width: 1px;
	background: #d5d3d0;
}
.svg-t {
	font-family: "DejaVu Sans", sans-serif;
	font-size: 12px;
}
.svg-big {
	font-size: 14px;
}
.svg-i {
	font-style: italic;
	font-weight: 700;
}
.svg-deck-a {
	font-family: "DejaVu Sans", sans-serif;
	font-size: 19px;
}
.omega {
	font-family: "Liberation Serif", serif;
	font-size: 29px;
	line-height: 1;
	color: #33393b;
}

/* body of the window */
.lo-body {
	flex: 1;
	min-height: 0;
	margin-top: 3px;
	display: flex;
	border-bottom: 1px solid #b5b3b0;
}
.slides-pane {
	width: 244px;
	padding-left: 6px;
	padding-right: 5px;
	border-right: 1px solid #d5d3d0;
	display: flex;
	flex-direction: column;
}
.slides-head {
	height: 35px;
	display: flex;
	align-items: center;
	justify-content: space-between;
	padding: 2px 0 0 1px;
	font-size: 17px;
	color: #33393b;
}
.slides-head svg {
	width: 11px;
	height: 11px;
	margin-top: -3px;
}
.slides-list {
	flex: 1;
	margin-bottom: 3px;
	background: #fff;
	border-top: 1px solid #aaa;
	border-left: 1px solid #ccc;
	padding: 9px 0 0 8px;
}
.thumb-sel {
	position: relative;
	width: 214px;
	height: 112px;
	background: linear-gradient(#8aaad0, #a2c0e2);
	border: 1px solid #5f80a8;
	padding: 3px 3px 3px 24px;
}
.thumb-num {
	position: absolute;
	left: 9px;
	top: 0;
	font-size: 16px;
	font-weight: 700;
	color: #444;
}
.thumb {
	height: 104px;
	background: #fff;
	border: 1px solid #666;
	box-shadow: -1px -1px 2px rgba(0, 0, 0, .3);
	text-align: center;
	font-family: "Liberation Sans", sans-serif;
	font-size: 9.500px;
	padding-top: 7px;
	color: #333;
}
.sash {
	width: 7px;
	display: flex;
	align-items: center;
	background: #f6f5f4;
}
.sash i {
	flex: none;
	width: 7px;
	height: 73px;
	margin-left: -2px;
	background: #8f9192;
	position: relative;
}
.sash i::after {
	content: "";
	position: absolute;
	left: 1px;
	top: 33px;
	border: 3px solid transparent;
	border-right: 3px solid #eee;
	border-left: 0;
}
.sash-r i {
	margin-left: -1px;
}
.sash-r i::after {
	left: 2px;
	border-left: 3px solid #eee;
	border-right: 0;
}
.editor {
	width: 1068px;
	display: flex;
	flex-direction: column;
}
.editor-row {
	flex: 1;
	min-height: 0;
	display: flex;
}
.outline {
	flex: 1;
	background: #fff;
	display: flex;
	align-items: flex-start;
	padding-left: 19px;
}
.outline-num {
	font-size: 12px;
	margin-top: 21px;
	color: #222;
}
.outline-ic {
	width: 27px;
	height: 21px;
	margin: 18px 7px 0 5px;
}
.outline-text {
	background: #000;
	color: #fff;
	font-family: "Liberation Sans", sans-serif;
	font-size: 50.300px;
	line-height: 57px;
	white-space: nowrap;
}
.vscroll {
	width: 13px;
	background: #cfcfcf;
	padding: 4px 4px 2px 2px;
}
.vscroll i,
.hscroll i {
	display: block;
	background: #7f8383;
	border-radius: 4px;
}
.vscroll i {
	height: 100%;
}
.hscroll {
	height: 14px;
	background: #cfcfcf;
	padding: 3px 17px 3px 4px;
}
.hscroll i {
	height: 8px;
}
.sash-r {
	border-left: 1px solid #b5b3b0;
}
.anim-pane {
	width: 434px;
	padding-left: 8px;
	padding-right: 8px;
	display: flex;
	flex-direction: column;
}
.anim-head {
	height: 32px;
	display: flex;
	align-items: center;
	font-size: 16.500px;
	color: #33393b;
	padding-bottom: 6px;
	position: relative;
}
.anim-head svg {
	position: absolute;
	right: 0;
	top: 9px;
	width: 9px;
	height: 9px;
}
.grip {
	width: 2px;
	height: 14px;
	margin: 0 7px 0 -4px;
	background: repeating-linear-gradient(#333 0 2px, transparent 2px 4px);
}
.anim-box {
	height: 402px;
	background: #fff;
	border: 1px solid #cdc9c5;
	text-align: center;
	font-size: 16.900px;
	line-height: 20px;
	color: #33393b;
	display: flex;
	align-items: center;
	justify-content: center;
}
.anim-rule {
	height: 2px;
	margin-top: 3px;
	background: #d5d2ce;
}
.fx-title {
	height: 27px;
	padding-top: 1px;
	font-size: 16.500px;
	color: #33393b;
}
.fx-row {
	height: 34px;
	margin-bottom: 3px;
	display: flex;
	gap: 6px;
}
.fx-row-btns {
	height: 32px;
	margin-bottom: 10px;
	gap: 4px;
}
.fx-row-btns .fx-label {
	margin-right: 3px;
}
.fx-row-cat {
	height: 33px;
	margin-bottom: 7px;
}
.fx-row-list {
	height: 103px;
	gap: 9px;
}
.fx-row-list .fx-label {
	padding-top: 0;
}
.fx-label {
	width: 83px;
	text-align: right;
	font-size: 17px;
	color: #9a9c9d;
	padding-top: 7px;
	white-space: nowrap;
	flex: none;
}
.btn {
	border: 1px solid #d5d2ce;
	border-radius: 5px;
	background: #f6f5f4;
	display: flex;
	align-items: center;
	justify-content: center;
	color: #9a9c9d;
	font-size: 17px;
}
.btn svg {
	width: 16px;
	height: 16px;
}
.btn-add {
	width: 68px;
	gap: 2px;
}
.btn-sq {
	width: 35px;
}
.btn-wide {
	width: 72px;
}
.combo {
	flex: none;
	width: 251px;
	border: 1px solid #d5d2ce;
	border-radius: 5px;
	background: #fbfaf9;
	position: relative;
}
.combo-full {
	width: 329px;
}
.combo::after {
	content: "";
	position: absolute;
	right: 13px;
	top: 14px;
	border: 6px solid transparent;
	border-top: 6px solid #999;
	border-bottom: 0;
}
.fx-list {
	flex: 1;
	background: #fbfaf9;
	border: 1px solid #cdc9c5;
}
.spin {
	width: 251px;
	border: 1px solid #d5d2ce;
	border-radius: 5px;
	background: #fbfaf9;
	display: flex;
	color: #9a9c9d;
	font-size: 17px;
}
.spin-val {
	flex: 1;
	display: flex;
	align-items: center;
	padding-left: 8px;
}
.spin-btn {
	width: 35px;
	border-left: 1px solid #e2e0dd;
	display: flex;
	align-items: center;
	justify-content: center;
	font-size: 22px;
	color: #d0cecb;
}
.fx-foot {
	padding-top: 3px;
	height: 37px;
	border-top: 1px solid #d5d2ce;
	display: flex;
	align-items: center;
	padding-left: 4px;
}
.check {
	width: 16px;
	height: 16px;
	background: #4a90e6;
	border-radius: 3px;
	display: flex;
}
.check svg {
	width: 16px;
	height: 16px;
}
.check-label {
	margin-left: 4px;
	font-size: 16.800px;
	color: #9a9c9d;
}
.btn-play {
	margin-left: auto;
	width: 72px;
	height: 33px;
	gap: 1px;
}
.deck {
	width: 50px;
	margin-left: 3px;
	padding-right: 14px;
	display: flex;
	flex-direction: column;
}
.deck-item {
	height: 42px;
	flex: none;
	display: flex;
	align-items: center;
	justify-content: center;
}
.deck-item svg {
	width: 24px;
	height: 24px;
}
.deck-item:first-child svg {
	width: 16px;
}
.deck-on {
	height: 34px;
	margin: 4px 0;
	background: #d6d2ce;
	border-radius: 6px;
}

/* status bar */
.statusbar {
	height: 30px;
	padding-bottom: 3px;
	display: flex;
	align-items: center;
	font-size: 15px;
	color: #33393b;
	border-bottom: 1px solid #8f8f8f;
}
.st {
	height: 24px;
	border-left: 1px solid #dcdad7;
	display: flex;
	align-items: center;
	white-space: nowrap;
	flex: none;
}
.st-a { width: 105px; padding-left: 15px; border-left: 0; }
.st-b { width: 439px; }
.st-c { width: 329px; padding-left: 9px; }
.st-d { width: 304px; }
.st-e { width: 23px; justify-content: center; }
.st-e svg { width: 12px; height: 12px; }
.st-f { width: 30px; }
.st-g { width: 358px; justify-content: center; }
.st-h { width: 22px; justify-content: center; }
.st-h svg { width: 14px; height: 14px; }
.st-i { width: 144px; padding: 0 6px 0 9px; gap: 3px; }
.st-j { width: 59px; padding-left: 9px; }
.zoom-btn {
	font-size: 20px;
	font-weight: 700;
	width: 11px;
	text-align: center;
	color: #2e3436;
	margin-left: -3px;
}
.zoom-track {
	flex: 1;
	height: 2px;
	background: #9a9a9a;
	position: relative;
}
.zoom-knob {
	position: absolute;
	left: 34px;
	top: -5px;
	width: 5px;
	height: 12px;
	background: #f6f5f4;
	border: 1px solid #444;
}
.zoom-tick {
	position: absolute;
	left: 50px;
	top: -3px;
	width: 1px;
	height: 8px;
	background: #888;
}

.tooltip {
	position: absolute;
	left: 68px;
	top: 5px;
	width: 332px;
	height: 45px;
	background: rgba(38, 38, 38, .97);
	border-radius: 4px;
	border: 1px solid #333;
	padding-left: 12px;
	display: flex;
	align-items: center;
	font-family: "Noto Sans", sans-serif;
	font-size: 18px;
	color: #eee;
	white-space: nowrap;
}

/* what shows below the qemu window */
.under {
	height: 37px;
	display: flex;
}
.under-dark {
	width: 8px;
	background: #1f1f1f;
}
.under-gap {
	width: 7px;
}
.under-black {
	width: 1112px;
	background: #000;
	padding: 19px 0 0 585px;
}
.pill {
	display: block;
	width: 160px;
	height: 8px;
	border-radius: 4px;
	background: #c8c8c8;
}
.under-grad {
	width: 475px;
	background: linear-gradient(#6a6a6a, #dedee0);
}
.under-right {
	flex: 1;
	background: #000;
	position: relative;
	overflow: hidden;
}
.under-pen {
	position: absolute;
	left: 13px;
	top: 0;
	width: 14px;
	height: 6px;
}
.under-text {
	position: absolute;
	left: 29px;
	top: -19px;
	font-family: "Noto Sans CJK SC", sans-serif;
	font-size: 16px;
	line-height: 24px;
	color: #aaa;
	white-space: nowrap;
}
.under-bar {
	position: absolute;
	left: 154px;
	right: 5px;
	top: 0;
	height: 12px;
	background: #1c1c1e;
}
.strip {
	height: 6px;
	background: #1f1f1f;
}

/* dock */
.dock-base {
	position: absolute;
	left: 720px;
	top: 1177px;
	width: 480px;
	height: 23px;
	background: #1f1f1f;
	border-radius: 14px 14px 0 0;
}
.dock {
	position: absolute;
	left: 736px;
	top: 1133px;
	display: flex;
}
.dock-item {
	position: relative;
	width: 64px;
	height: 66px;
	display: flex;
	flex-direction: column;
	align-items: center;
}
.dock-ic {
	width: 56px;
	height: 56px;
}
.dock-clock {
	width: 51px;
	height: 51px;
	margin-top: 3px;
}
.clock-nums {
	font-family: "DejaVu Sans", sans-serif;
	font-size: 4px;
}
.dock-dot {
	position: absolute;
	bottom: 2px;
	width: 5px;
	height: 5px;
	border-radius: 50%;
	background: #2a5be0;
}
.dock-dot-on {
	width: 63px;
	height: 4px;
	border-radius: 2px;
}
.snd-badge {
	position: absolute;
	left: 7px;
	top: 3px;
	width: 24px;
	height: 24px;
	border-radius: 50%;
	background: #111;
	border: 2px solid #d0d0d0;
	box-shadow: 0 0 0 1px #000;
	color: #ddd;
	display: flex;
	align-items: center;
	justify-content: center;
}
.snd-badge svg {
	width: 16px;
	height: 16px;
}
.cursor {
	position: absolute;
	left: 479px;
	top: 61px;
	width: 24px;
	height: 40px;
}
```
